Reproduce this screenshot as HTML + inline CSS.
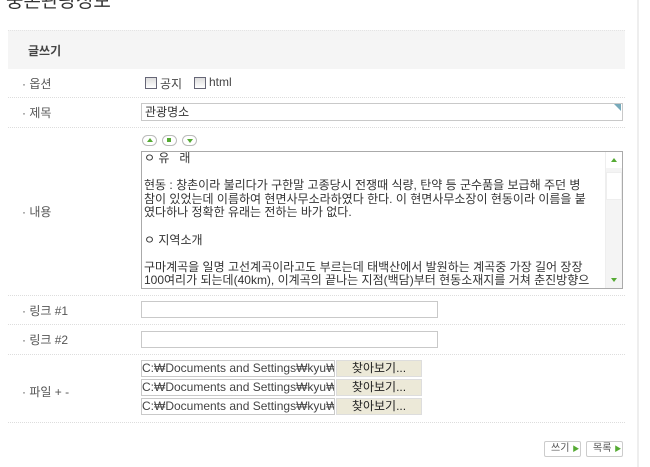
<!DOCTYPE html>
<html><head><meta charset="utf-8"><style>
body{margin:0;width:650px;height:467px;background:#fff;font-family:"Liberation Sans","Noto Sans CJK KR",sans-serif;font-size:12px;color:#444;position:relative;overflow:hidden}
.a{position:absolute}
.vline{left:637px;top:0;width:2px;height:467px;background:#eee}
.hdr{left:8px;top:30px;width:617px;height:38px;background:#f5f5f5;border-top:1px dotted #e4e4e4}
.sep{left:8px;height:0;border-top:1px dotted #ddd;width:617px}
.lbl{left:22px;color:#555}
.in{border:1px solid #c9c9c9;background:#fff;box-sizing:border-box}
.cb{width:12px;height:12px;border:1px solid #667;background:linear-gradient(#ddd,#fff);box-sizing:border-box}
.rb{width:15px;height:11px;border:1px solid #bbb;border-radius:6px;background:#fff;box-sizing:border-box}
.fb{background:#ece9d8;border:1px solid #ddd;box-sizing:border-box;text-align:center;color:#222;line-height:15px}
.fi{color:#444;line-height:14px;white-space:nowrap;overflow:hidden;font-size:12px}
.btn{height:16px;border:1px solid #ccc;border-radius:2px;box-sizing:border-box;font-size:10px;line-height:14px;padding-left:6px;color:#555;white-space:nowrap}
</style></head><body>
<div class="a" style="left:6px;top:-14px;font-size:19px;color:#333">중촌관광정보</div>
<div class="a vline"></div>
<div class="a hdr"></div>
<div class="a" style="left:28px;top:42px;font-weight:bold;color:#444">글쓰기</div>

<div class="a lbl" style="top:75px">· 옵션</div>
<div class="a cb" style="left:145px;top:77px"></div><div class="a" style="left:160px;top:75px">공지</div>
<div class="a cb" style="left:194px;top:77px"></div><div class="a" style="left:209px;top:75px">html</div>
<div class="a sep" style="top:97px"></div>

<div class="a lbl" style="top:104px">· 제목</div>
<div class="a in" style="left:141px;top:103px;width:482px;height:18px;padding:1px 3px;line-height:14px;color:#333">관광명소</div>
<div class="a" style="left:614px;top:104px;width:0;height:0;border-top:7px solid #7ab;border-left:7px solid transparent"></div>
<div class="a sep" style="top:127px"></div>

<div class="a rb" style="left:142px;top:135px"></div><div class="a" style="left:147px;top:138px;border-bottom:4px solid #5a3;border-left:3px solid transparent;border-right:3px solid transparent;width:0"></div>
<div class="a rb" style="left:162px;top:135px"></div><div class="a" style="left:167px;top:138px;width:4px;height:4px;background:#5a3"></div>
<div class="a rb" style="left:182px;top:135px"></div><div class="a" style="left:187px;top:139px;border-top:4px solid #5a3;border-left:3px solid transparent;border-right:3px solid transparent;width:0"></div>

<div class="a lbl" style="top:203px">· 내용</div>
<div class="a in" style="left:141px;top:151px;width:482px;height:138px;overflow:hidden;border-color:#aaa">
<div style="padding:0 20px 0 2px;line-height:13.6px;color:#333;font-size:12px;white-space:pre">ㅇ 유   래

현동 : 창촌이라 불리다가 구한말 고종당시 전쟁때 식량, 탄약 등 군수품을 보급해 주던 병
참이 있었는데 이름하여 현면사무소라하였다 한다. 이 현면사무소장이 현동이라 이름을 붙
였다하나 정확한 유래는 전하는 바가 없다.

ㅇ 지역소개

구마계곡을 일명 고선계곡이라고도 부르는데 태백산에서 발원하는 계곡중 가장 길어 장장
100여리가 되는데(40km), 이계곡의 끝나는 지점(백담)부터 현동소재지를 거쳐 춘진방향으
로 이르기까지 계곡이 이어진다.</div>
<div class="a" style="left:463px;top:0;width:17px;height:136px;background:#f4f4f4;border-left:1px solid #eee"></div>
<div class="a" style="left:464px;top:0;width:16px;height:16px;background:#fff"></div>
<div class="a" style="left:469px;top:6px;border-bottom:4px solid #5a3;border-left:3px solid transparent;border-right:3px solid transparent;width:0"></div>
<div class="a" style="left:464px;top:20px;width:16px;height:28px;background:#fff;border:1px solid #eee;box-sizing:border-box"></div>
<div class="a" style="left:469px;top:126px;border-top:4px solid #5a3;border-left:3px solid transparent;border-right:3px solid transparent;width:0"></div>
</div>
<div class="a sep" style="top:295px"></div>

<div class="a lbl" style="top:302px">· 링크 #1</div>
<div class="a in" style="left:141px;top:301px;width:297px;height:17px"></div>
<div class="a sep" style="top:324px"></div>
<div class="a lbl" style="top:331px">· 링크 #2</div>
<div class="a in" style="left:141px;top:331px;width:297px;height:17px"></div>
<div class="a sep" style="top:354px"></div>

<div class="a lbl" style="top:383px">· 파일 + -</div>
<div class="a in fi" style="left:141px;top:360px;width:194px;height:17px">C:₩Documents and Settings₩kyu₩</div>
<div class="a fb" style="left:336px;top:360px;width:86px;height:17px">찾아보기...</div>
<div class="a in fi" style="left:141px;top:379px;width:194px;height:17px">C:₩Documents and Settings₩kyu₩</div>
<div class="a fb" style="left:336px;top:379px;width:86px;height:17px">찾아보기...</div>
<div class="a in fi" style="left:141px;top:398px;width:194px;height:17px">C:₩Documents and Settings₩kyu₩</div>
<div class="a fb" style="left:336px;top:398px;width:86px;height:17px">찾아보기...</div>
<div class="a sep" style="top:422px"></div>

<div class="a btn" style="left:544px;top:441px;width:37px">쓰기<span style="color:#5a3;font-size:7px;margin-left:3px">▶</span></div>
<div class="a btn" style="left:586px;top:441px;width:37px">목록<span style="color:#5a3;font-size:7px;margin-left:3px">▶</span></div>
</body></html>
